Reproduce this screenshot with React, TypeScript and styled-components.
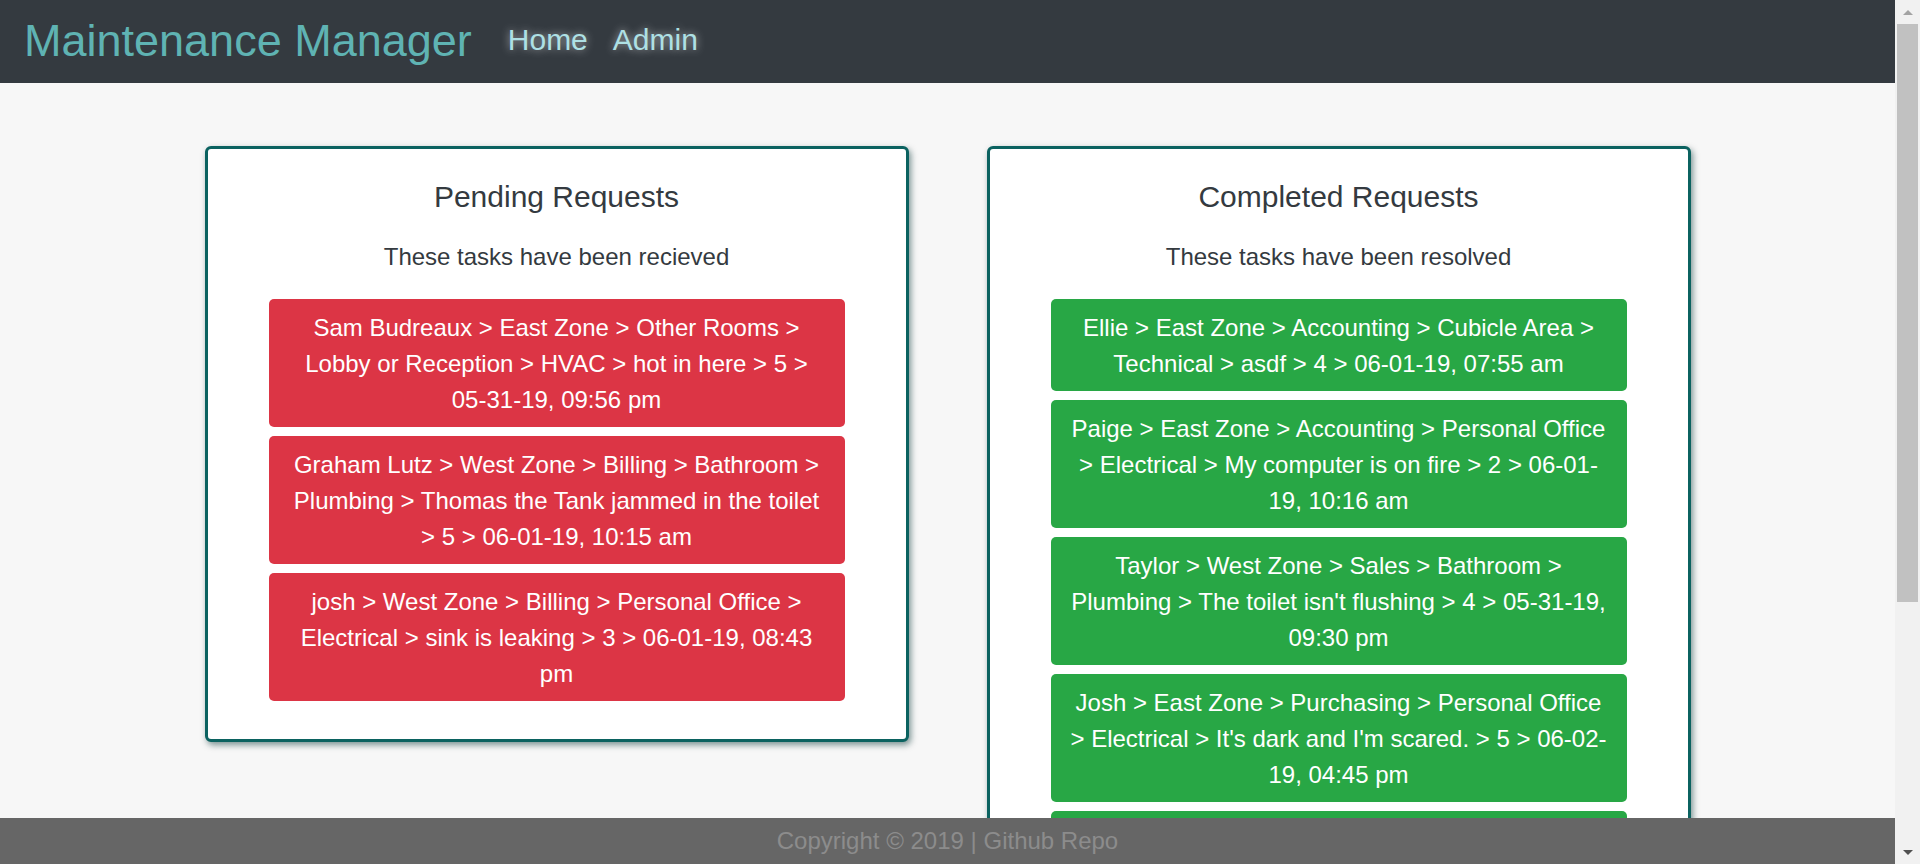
import styled, { createGlobalStyle } from 'styled-components'

const pending = [
	'Sam Budreaux > East Zone > Other Rooms > Lobby or Reception > HVAC > hot in here > 5 > 05-31-19, 09:56 pm',
	'Graham Lutz > West Zone > Billing > Bathroom > Plumbing > Thomas the Tank jammed in the toilet > 5 > 06-01-19, 10:15 am',
	'josh > West Zone > Billing > Personal Office > Electrical > sink is leaking > 3 > 06-01-19, 08:43 pm',
]

const completed = [
	'Ellie > East Zone > Accounting > Cubicle Area > Technical > asdf > 4 > 06-01-19, 07:55 am',
	'Paige > East Zone > Accounting > Personal Office > Electrical > My computer is on fire > 2 > 06-01-19, 10:16 am',
	"Taylor > West Zone > Sales > Bathroom > Plumbing > The toilet isn't flushing > 4 > 05-31-19, 09:30 pm",
	"Josh > East Zone > Purchasing > Personal Office > Electrical > It's dark and I'm scared. > 5 > 06-02-19, 04:45 pm",
	'Graham Lutz > West Zone > Billing > Conference Room > HVAC > too cold in here > 3 > 06-02-19, 05:10 pm',
	'Sam Budreaux > East Zone > Other Rooms > Break Room > Plumbing > sink is clogged > 2 > 06-02-19, 06:22 pm',
]

export default function App() {
	return (
		<>
			<GlobalStyle />
			<Page>
				<NavBar>
					<Brand>Maintenance Manager</Brand>
					<Nav>
						<NavLink href="#">Home</NavLink>
						<NavLink href="#">Admin</NavLink>
					</Nav>
				</NavBar>

				<Main>
					<Card>
						<CardTitle>Pending Requests</CardTitle>
						<CardText>These tasks have been recieved</CardText>
						<RequestList>
							{pending.map((r, i) => (
								<Request key={i} $status="pending">{r}</Request>
							))}
						</RequestList>
					</Card>

					<Card>
						<CardTitle>Completed Requests</CardTitle>
						<CardText>These tasks have been resolved</CardText>
						<RequestList>
							{completed.map((r, i) => (
								<Request key={i} $status="done">{r}</Request>
							))}
						</RequestList>
					</Card>
				</Main>

				<Footer>Copyright © 2019 | Github Repo</Footer>
			</Page>

			{/* the browser's scrollbar, drawn since the headless page hides it */}
			<ScrollRail>
				<ScrollArrow>
					<svg width="10" height="5" viewBox="0 0 10 5">
						<polygon points="0,5 5,0 10,5" fill="#a3a3a3" />
					</svg>
				</ScrollArrow>
				<ScrollTrack>
					<ScrollThumb />
				</ScrollTrack>
				<ScrollArrow>
					<svg width="10" height="5" viewBox="0 0 10 5">
						<polygon points="0,0 10,0 5,5" fill="#505050" />
					</svg>
				</ScrollArrow>
			</ScrollRail>
		</>
	)
}

const GlobalStyle = createGlobalStyle`
	html, body {
		margin: 0;
		padding: 0;
	}

	body {
		background: #f7f7f7;
		font-family: "Liberation Sans", Arial, sans-serif;
		color: #343a40;
	}
`

const Page = styled.div`
	margin-right: 25px;
`

const NavBar = styled.header`
	display: flex;
	align-items: center;
	height: 83px;
	padding: 0 24px;
	background: #343a40;
`

const Brand = styled.div`
	font-size: 45px;
	line-height: 1;
	color: #5fb3b3;
	margin-right: 36px;
	margin-bottom: 2px;
`

const Nav = styled.nav`
	display: flex;
	gap: 25px;
	margin-bottom: 4px;
`

const NavLink = styled.a`
	font-size: 30px;
	line-height: 1;
	color: #aee0e4;
	text-decoration: none;
	text-shadow: 0 0 8px rgba(255, 255, 255, 0.6);
`

const Main = styled.main`
	display: flex;
	justify-content: center;
	align-items: flex-start;
	gap: 78px;
	padding: 63px 0 109px;
`

const Card = styled.section`
	box-sizing: border-box;
	width: 704px;
	padding: 30px 61px 38px;
	background: #fff;
	border: 3px solid #0b6260;
	border-radius: 6px;
	box-shadow: 2px 3px 6px rgba(0, 50, 50, 0.5);
	text-align: center;
`

const CardTitle = styled.h3`
	margin: 0 0 24px;
	font-size: 30px;
	font-weight: 400;
	line-height: 1.2;
`

const CardText = styled.p`
	margin: 0 0 24px;
	font-size: 24px;
	line-height: 1.5;
`

const RequestList = styled.div`
	display: flex;
	flex-direction: column;
	gap: 9px;
`

const Request = styled.div<{ $status: 'pending' | 'done' }>`
	padding: 11px 18px 9px;
	border-radius: 5px;
	background: ${p => (p.$status === 'pending' ? '#dc3545' : '#28a745')};
	color: #fff;
	font-size: 24px;
	line-height: 1.5;
`

const Footer = styled.footer`
	position: fixed;
	left: 0;
	right: 25px;
	bottom: 0;
	height: 46px;
	background: #666;
	color: #8c8c8c;
	font-size: 24px;
	line-height: 46px;
	text-align: center;
`

const ScrollRail = styled.div`
	position: fixed;
	top: 0;
	right: 0;
	bottom: 0;
	width: 25px;
	display: flex;
	flex-direction: column;
	background: #f1f1f1;
`

const ScrollArrow = styled.div`
	height: 24px;
	display: flex;
	align-items: center;
	justify-content: center;
	padding-left: 1px;
`

const ScrollTrack = styled.div`
	flex: 1;
	padding: 0 2px;
`

const ScrollThumb = styled.div`
	height: 578px;
	background: #c1c1c1;
`
